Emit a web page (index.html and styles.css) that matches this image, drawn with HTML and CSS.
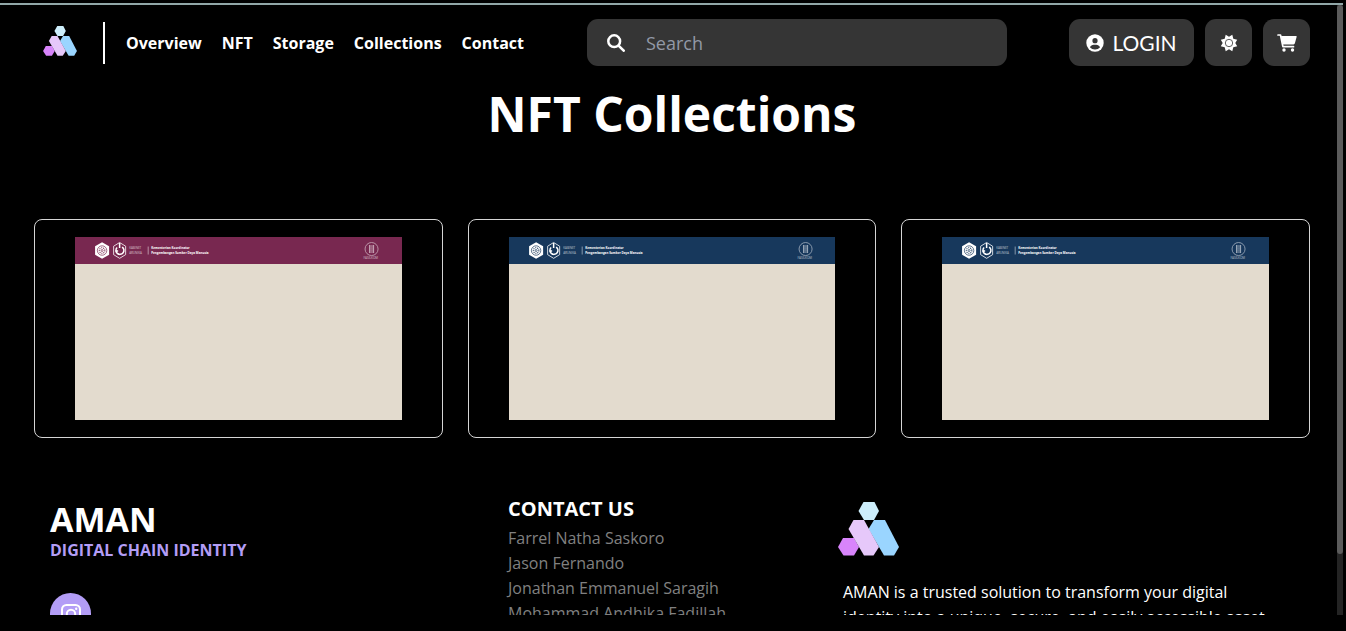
FILE: index.html
```html
<!DOCTYPE html>
<html lang="en">
<head>
<meta charset="utf-8">
<meta name="viewport" content="width=device-width, initial-scale=1">
<title>NFT Collections</title>
<link rel="stylesheet" href="styles.css">
</head>
<body>
<svg class="defs" aria-hidden="true">
  <symbol id="logo" viewBox="0 0 61 54">
    <path fill="#cdeefb" d="M25.500 0h11l4.500 9-5 9h-10l-5.500-9z"/>
    <path fill="#d884fb" d="M5 36h11l5 9-5 8.500H5.500L0 45z"/>
    <path fill="#9ad5ff" d="M36 18h11l14 27-5 8.500H46L30.500 27z"/>
    <path fill="#e6c8fa" d="M15.500 18h10.500l15 27-5.500 8.500H26L10.500 27z"/>
  </symbol>
  <symbol id="emblems" viewBox="0 0 326 27">
    <path fill="#fff" d="M27 5.200l7 4v8.400l-7 4.200-7-4.200V9.200z"/>
    <g fill="none" stroke="var(--strip)">
      <circle cx="27" cy="13.500" r="4.700" stroke-width=".7"/>
      <circle cx="27" cy="13.500" r="2.800" stroke-dasharray="1 1"/>
      <circle cx="27" cy="13.500" r="1" stroke-width=".7"/>
    </g>
    <g fill="none" stroke="#fff">
      <path d="M44.500 5.500l6 3.700v8.400l-6 3.700-6-3.700V9.200z" stroke-width=".8"/>
      <path d="M42 10.500a4 4 0 1 0 5-.5M44.500 6v5M40 14h3" stroke-width="1.500"/>
    </g>
    <path stroke="#fff" stroke-width=".7" opacity=".7" d="M73 9.500v8"/>
    <g fill="none" stroke="#fff" opacity=".6">
      <circle cx="296" cy="12" r="6.500" stroke-width=".8"/>
      <path d="M293.500 9h5M293.500 11h5M293.500 13h5M293.500 15h5M294 8v8M298 8v8" stroke-width=".9"/>
    </g>
  </symbol>
</svg>

<div class="frame">
  <div class="page">
    <header class="header">
      <a class="brand" href="#" aria-label="AMAN home"><svg class="brand-logo"><use href="#logo"/></svg></a>
      <nav class="nav">
        <a href="#">Overview</a>
        <a href="#">NFT</a>
        <a href="#">Storage</a>
        <a href="#">Collections</a>
        <a href="#">Contact</a>
      </nav>
      <label class="search">
        <svg class="icon" viewBox="0 0 18 18" fill="none" stroke="#fff" stroke-linecap="round"><circle cx="7.200" cy="7.200" r="5.900" stroke-width="2.500"/><path d="M11.800 11.800l4.900 4.900" stroke-width="2.600"/></svg>
        <input type="search" placeholder="Search" aria-label="Search">
      </label>
      <div class="actions">
        <button class="btn login" type="button">
          <svg class="icon" viewBox="0 0 18 18"><circle cx="9" cy="9" r="8.700" fill="#fff"/><circle cx="9" cy="6.700" r="2.600" fill="#353535"/><path fill="#353535" d="M3.900 13.300c.8-1.800 2.200-2.600 3.800-2.600h2.600c1.600 0 3 .8 3.800 2.600A6.700 6.700 0 0 1 9 15.500a6.700 6.700 0 0 1-5.100-2.200z"/></svg>
          LOGIN
        </button>
        <button class="btn square" type="button" aria-label="Theme">
          <svg class="icon" viewBox="0 0 18 18"><path fill="#fff" d="M5.700.8L9 2.700 12.300.8l1 3.900 3.900 1L15.300 9l1.900 3.300-3.900 1-1 3.900L9 15.300l-3.300 1.900-1-3.900-3.900-1L2.700 9 .8 5.700l3.900-1z"/><circle cx="9" cy="9" r="3.700" fill="none" stroke="#353535" stroke-width=".8"/></svg>
        </button>
        <button class="btn square" type="button" aria-label="Cart">
          <svg class="icon cart" viewBox="0 0 20 18"><path fill="none" stroke="#fff" stroke-width="1.700" stroke-linecap="round" stroke-linejoin="round" d="M1 1h2.500l2.400 11.700h10.600"/><path fill="#fff" d="M4 2h15c.5 0 .8.400.6.900l-1.700 6.400c-.2.700-.7 1.100-1.400 1.100H5.700z"/><circle cx="7" cy="16" r="1.700" fill="#fff"/><circle cx="15.500" cy="16" r="1.700" fill="#fff"/></svg>
        </button>
      </div>
    </header>

    <main>
      <h1 class="title">NFT Collections</h1>
      <div class="cards">
        <article class="card"><div class="cover plum">
          <svg class="strip" viewBox="0 0 326 27">
            <use href="#emblems"/>
            <text class="faint" x="54" y="12">KABINET</text>
            <text class="faint" x="54" y="17">ARUNIKA</text>
            <text x="76" y="12">Kementerian Koordinator</text>
            <text x="76" y="17">Pengembangan Sumber Daya Manusia</text>
            <text class="faint" x="288" y="22">FASILKOM</text>
          </svg>
        </div></article>
        <article class="card"><div class="cover navy">
          <svg class="strip" viewBox="0 0 326 27">
            <use href="#emblems"/>
            <text class="faint" x="54" y="12">KABINET</text>
            <text class="faint" x="54" y="17">ARUNIKA</text>
            <text x="76" y="12">Kementerian Koordinator</text>
            <text x="76" y="17">Pengembangan Sumber Daya Manusia</text>
            <text class="faint" x="288" y="22">FASILKOM</text>
          </svg>
        </div></article>
        <article class="card"><div class="cover navy">
          <svg class="strip" viewBox="0 0 326 27">
            <use href="#emblems"/>
            <text class="faint" x="54" y="12">KABINET</text>
            <text class="faint" x="54" y="17">ARUNIKA</text>
            <text x="76" y="12">Kementerian Koordinator</text>
            <text x="76" y="17">Pengembangan Sumber Daya Manusia</text>
            <text class="faint" x="288" y="22">FASILKOM</text>
          </svg>
        </div></article>
      </div>
    </main>

    <footer class="footer">
      <section class="about">
        <h2>AMAN</h2>
        <p>DIGITAL CHAIN IDENTITY</p>
        <a class="social" href="#" aria-label="Instagram"><svg class="insta" viewBox="0 0 20 20" fill="none" stroke="#fff" stroke-width="2"><rect x="1" y="1" width="18" height="18" rx="4.500"/><circle cx="10" cy="10" r="4.200"/><circle cx="15.200" cy="4.800" r=".6" stroke-width="1.200"/></svg></a>
      </section>
      <section class="contact">
        <h3>CONTACT US</h3>
        <ul>
          <li>Farrel Natha Saskoro</li>
          <li>Jason Fernando</li>
          <li>Jonathan Emmanuel Saragih</li>
          <li>Mohammad Andhika Fadillah</li>
        </ul>
      </section>
      <section class="mission">
        <svg class="mission-logo"><use href="#logo"/></svg>
        <p>AMAN is a trusted solution to transform your digital identity into a unique, secure, and easily accessible asset</p>
      </section>
    </footer>
  </div>
  <div class="scrollbar" aria-hidden="true"><div class="thumb"></div></div>
</div>
</body>
</html>
```
FILE: styles.css
```css
* { box-sizing: border-box; }
body, h1, h2, h3, p, ul { margin: 0; padding: 0; }
body {
  height: 100vh;
  padding: 3px 0 16px;
  overflow: hidden;
  background: #000;
  color: #fff;
  font-family: "Open Sans", "Noto Sans", sans-serif;
  font-size: 16px;
}
a { color: inherit; text-decoration: none; }
.defs { position: absolute; width: 0; height: 0; }

.frame {
  position: relative;
  height: 100%;
  overflow: hidden;
}
.frame::before {
  content: "";
  display: block;
  height: 2px;
  margin-right: 3px;
  background: #91a7a8;
}
.page { padding: 0 36px 0 34px; }

.header {
  display: flex;
  align-items: center;
  padding-top: 14px;
}
.brand {
  display: flex;
  padding: 4px 26px 8px 9px;
  border-right: 2px solid #fff;
}
.brand-logo { width: 34px; height: 30px; }
.nav {
  display: flex;
  gap: 20px;
  margin-left: 21px;
  font-size: 16px;
  font-weight: 700;
}
.search {
  display: flex;
  align-items: center;
  gap: 21px;
  width: 420px;
  height: 47px;
  margin-left: auto;
  padding: 0 20px;
  border-radius: 11px;
  background: #353535;
}
.search input {
  flex: 1;
  min-width: 0;
  padding: 0;
  border: 0;
  outline: 0;
  background: none;
  color: #fff;
  font: inherit;
  font-size: 18px;
}
.search input::placeholder { color: #9299a6; opacity: 1; }
.icon { flex: none; width: 18px; height: 18px; }
.cart { width: 20px; }
.actions {
  display: flex;
  gap: 11px;
  margin-left: 62px;
}
.btn {
  display: flex;
  align-items: center;
  justify-content: center;
  height: 47px;
  padding: 0;
  border: 0;
  border-radius: 11px;
  background: #353535;
  color: #fff;
}
.square { width: 47px; }
.login {
  gap: 8px;
  width: 125px;
  font-family: Lato, sans-serif;
  font-size: 21px;
}

.title {
  margin-top: 15px;
  font-size: 48px;
  font-weight: 700;
  line-height: 66px;
  text-align: center;
}
.cards {
  display: grid;
  grid-template-columns: repeat(3, 1fr);
  gap: 25px;
  margin-top: 72px;
}
.card {
  padding: 17px 40px;
  border: 1px solid #d5d5d5;
  border-radius: 8px;
}
.cover {
  aspect-ratio: 326 / 183;
  background: #e3dbce;
}
.plum { --strip: #782850; }
.navy { --strip: #17385c; }
.strip {
  display: block;
  width: 100%;
  background: var(--strip);
  fill: #fff;
  font-size: 3px;
  font-weight: 700;
}
.faint { opacity: .65; font-weight: 400; }

.footer {
  display: grid;
  grid-template-columns: 458px 330px 1fr;
  margin-top: 60px;
  padding-left: 16px;
}
.about h2 { font-size: 34px; line-height: 42px; }
.about p {
  color: #b39df6;
  font-weight: 700;
  line-height: 20px;
}
.social {
  display: flex;
  align-items: center;
  justify-content: center;
  width: 41px;
  height: 41px;
  margin-top: 33px;
  border-radius: 50%;
  background: #b39df6;
}
.insta { width: 20px; height: 20px; }
.contact h3 {
  margin-bottom: 7px;
  font-size: 20px;
  line-height: 21px;
}
.contact ul {
  color: #808080;
  list-style: none;
  line-height: 25px;
}
.mission-logo {
  display: block;
  width: 61px;
  height: 54px;
  margin-top: 4px;
}
.mission p {
  max-width: 440px;
  padding-left: 5px;
  margin-top: 24px;
  line-height: 25px;
}

.scrollbar {
  position: absolute;
  top: 2px;
  right: 3px;
  bottom: 0;
  width: 6px;
  background: #242424;
}
.thumb {
  height: 90%;
  border-radius: 3px;
  background: #5b5b5b;
}
```
